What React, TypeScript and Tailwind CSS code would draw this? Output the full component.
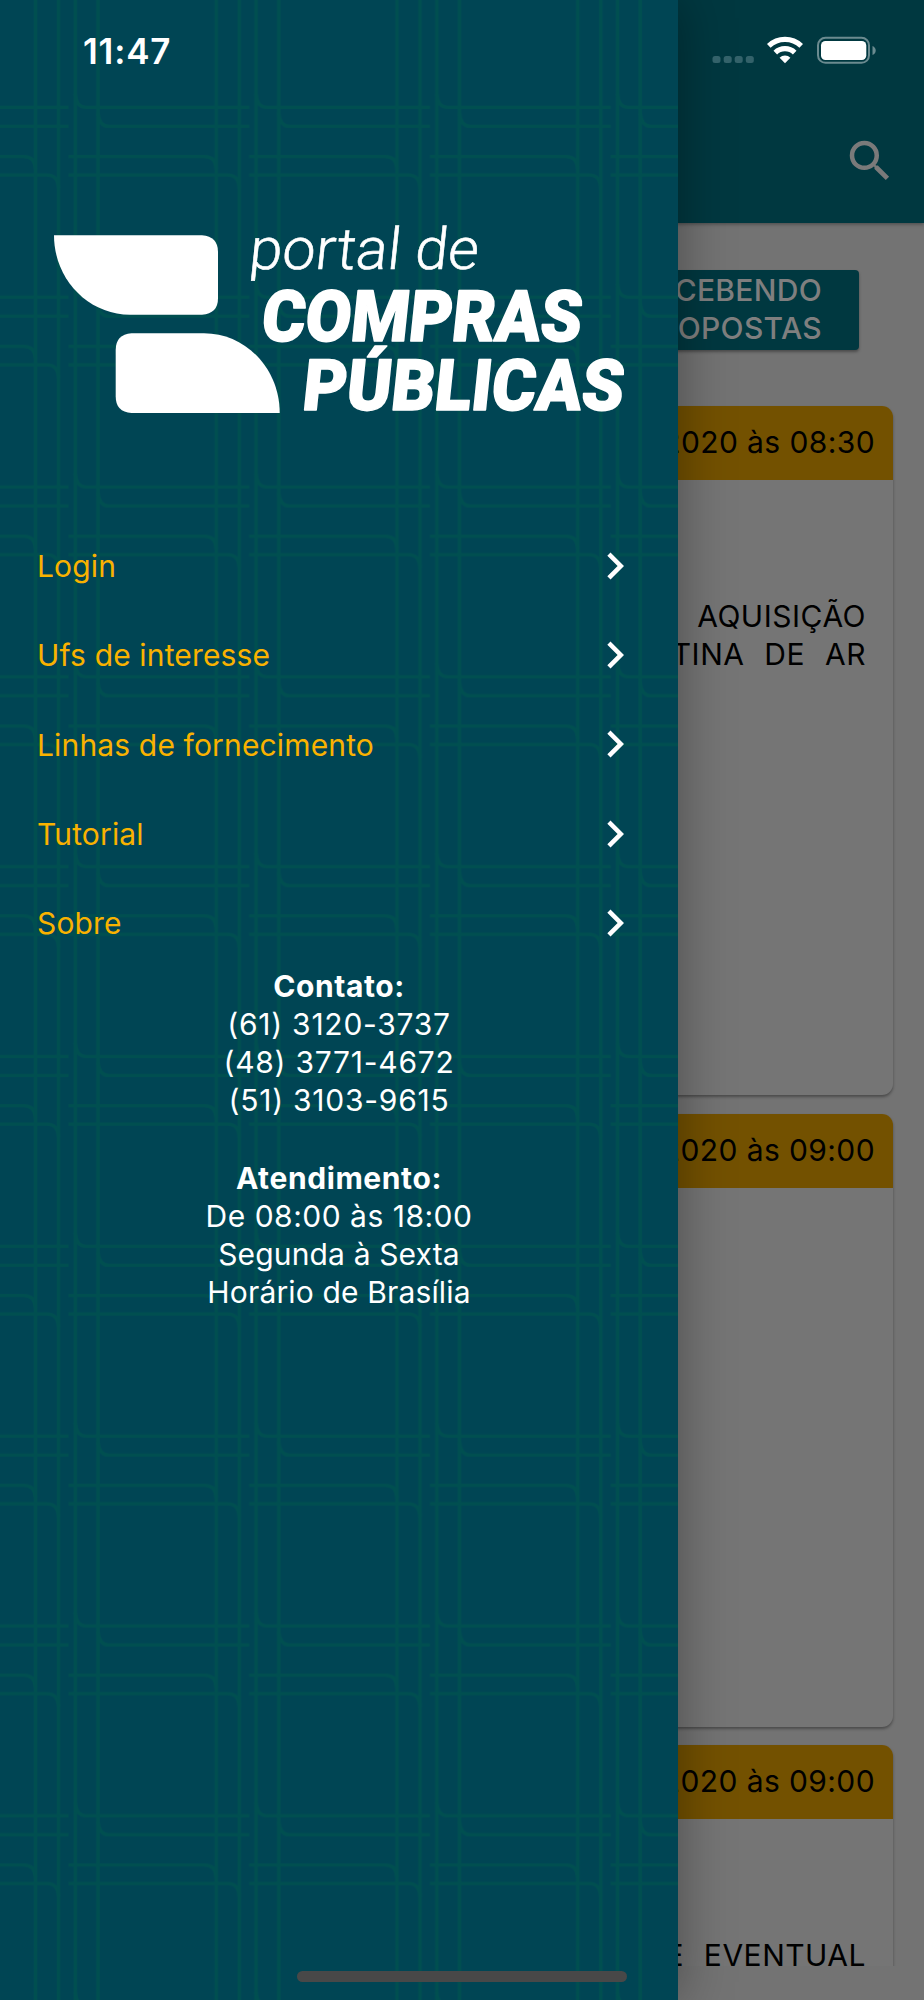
import type { ReactNode } from "react";

const menuItems = ["Login", "Ufs de interesse", "Linhas de fornecimento", "Tutorial", "Sobre"];

const telefones = ["(61) 3120-3737", "(48) 3771-4672", "(51) 3103-9615"];

const DrawerPattern = () => (
  <svg className="absolute inset-0" width="678" height="2000">
    <defs>
      <pattern id="trama" x="0" y="60" width="180.75" height="189.83" patternUnits="userSpaceOnUse">
        <g fill="none" stroke="#004f50" strokeWidth="3.4">
          <path d="M35.5 0V190M58.5 0V190M75.3 0V190M98 0V190" />
          <path d="M75.3 34Q76 47.3 86 47.3H181M0 47.3H68.5" />
          <path d="M98 53Q99 66.3 109 66.3H181M0 66.3H68.5" />
          <path d="M68.5 96.5H181M0 96.5H24Q35 96.5 35.5 109" />
          <path d="M68.5 115H181M0 115H47Q58 115 58.5 128" />
        </g>
      </pattern>
    </defs>
    <rect width="678" height="2000" fill="url(#trama)" />
  </svg>
);

const Logo = () => (
  <svg className="block" width="678" height="220" viewBox="0 215 678 220" fill="#fff">
    <path d="M54 235.3H202Q218 236.5 218 252V298.5Q218 313.5 202 314.7H130C88 314.7 54 279 54 235.3Z" />
    <path d="M131.5 333.3H204C246 333.3 279.7 369 279.7 413H131.5Q115.7 412 115.7 396.5V350Q115.7 334.5 131.5 333.3Z" />
    <g className="font-['Roboto']" stroke="#fff">
      <text transform="translate(248 268.5) skewX(-6)" fontSize="58" fontWeight="300" strokeWidth="0.6" textLength="229" lengthAdjust="spacingAndGlyphs">portal de</text>
      <text transform="translate(260 341) skewX(-6)" fontSize="71" fontWeight="900" strokeWidth="1.6" strokeLinejoin="round" textLength="320" lengthAdjust="spacingAndGlyphs">COMPRAS</text>
      <text transform="translate(301 410) skewX(-6)" fontSize="71" fontWeight="900" strokeWidth="1.6" strokeLinejoin="round" textLength="321" lengthAdjust="spacingAndGlyphs">PÚBLICAS</text>
    </g>
  </svg>
);

const StatusBar = () => (
  <div className="absolute inset-x-0 top-0 h-[102px] flex items-center justify-between pl-[83px] pr-[48px] text-white">
    <span className="text-[35px] font-semibold tracking-[0.8px]">11:47</span>
    <svg width="164" height="30" viewBox="712 36 164 30">
      <g fill="#33626a">
        <rect x="712.5" y="56" width="8" height="7" rx="2.5" />
        <rect x="723.7" y="56" width="8" height="7" rx="2.5" />
        <rect x="734.7" y="56" width="8" height="7" rx="2.5" />
        <rect x="745.8" y="56" width="8" height="7" rx="2.5" />
      </g>
      <g fill="none" stroke="#fff" strokeWidth="5.2">
        <path d="M768.8 45.8A23.5 23.5 0 0 1 801.2 45.8" />
        <path d="M775.3 52.6A14 14 0 0 1 794.7 52.6" />
      </g>
      <path d="M785 63.2L779.6 57.8A7.7 7.7 0 0 1 790.4 57.8Z" fill="#fff" />
      <rect x="818" y="37.8" width="51" height="25" rx="7.5" fill="none" stroke="#6b8b90" strokeWidth="2" />
      <rect x="821" y="41" width="45.3" height="19" rx="4.5" fill="#fff" />
      <path d="M872.5 46Q875.7 47.5 875.7 50.5T872.5 55Z" fill="#6b8b90" />
    </svg>
  </div>
);

const Card = ({ data, className, children }: { data: string; className: string; children?: ReactNode }) => (
  <div className={`ml-8 mr-[31px] rounded-[11px] bg-[#757575] shadow-[0_2px_3px_rgba(0,0,0,0.35)] overflow-hidden shrink-0 ${className}`}>
    <div className="h-[74px] bg-[#735100] pr-[18px] pb-[2px] flex items-center justify-end text-[30px] tracking-[0.4px]">
      {data}
    </div>
    <div className="pr-[27px] text-right text-[30px] leading-[38px] tracking-[0.5px]">{children}</div>
  </div>
);

const App = () => {
  return (
    <div className="relative w-[924px] h-[2000px] overflow-hidden bg-[#737373] font-['Inter',sans-serif] text-black">
      <div className="h-[1966px] flex flex-col overflow-hidden">
        <header className="h-[223px] shrink-0 bg-[#003840] shadow-[0_1px_4px_rgba(0,0,0,0.4)] flex items-end justify-end pr-[27px] pb-[35px]">
          <svg width="54" height="54" viewBox="0 0 24 24" fill="#7a7a7a">
            <path d="M15.5 14h-.79l-.28-.27A6.471 6.471 0 0 0 16 9.5 6.5 6.5 0 1 0 9.5 16c1.61 0 3.09-.59 4.23-1.57l.27.28v.79l5 4.99L20.49 19l-4.99-5zm-6 0C7.01 14 5 11.99 5 9.5S7.01 5 9.5 5 14 7.01 14 9.5 11.99 14 9.5 14z" />
          </svg>
        </header>

        <div className="flex justify-end pr-[65px] pt-[47px] pb-[56px]">
          <button className="w-[300px] h-[80px] rounded-[4px] bg-[#003840] pr-[37px] pb-[2px] text-right text-[30px] leading-[38px] font-medium tracking-[0.3px] text-[#7f7f7f] shadow-[0_2px_3px_rgba(0,0,0,0.35)]">
            RECEBENDO
            <br />
            PROPOSTAS
          </button>
        </div>

        <Card data="14/12/2020 às 08:30" className="h-[689px]">
          <p className="pt-[117px] [word-spacing:11px]">A AQUISIÇÃO</p>
          <p className="[word-spacing:11px]">CORTINA DE AR</p>
        </Card>
        <Card data="14/12/2020 às 09:00" className="mt-[19px] h-[613px]" />
        <Card data="14/12/2020 às 09:00" className="mt-[18px] h-[400px]">
          <p className="pt-[117px] [word-spacing:11px]">DE EVENTUAL</p>
        </Card>
      </div>

      <aside className="absolute left-0 top-0 w-[678px] h-full bg-[#004554] shadow-[0_0_50px_rgba(0,0,0,0.36)]">
        <DrawerPattern />
        <div className="relative pt-[215px] text-white">
          <Logo />
          <nav className="pt-[87px]">
            {menuItems.map((item) => (
              <a key={item} className="h-[89.3px] pl-[37px] pr-[36px] flex items-center justify-between text-[30px] tracking-[0.15px] text-[#f9b200]">
                {item}
                <svg className="mb-[2px]" width="54" height="54" viewBox="0 0 24 24" fill="#fff">
                  <path d="M10 6L8.59 7.41 13.17 12l-4.58 4.59L10 18l6-6z" />
                </svg>
              </a>
            ))}
          </nav>
          <div className="-mt-px text-center text-[30px] leading-[38px]">
            <p className="font-bold tracking-[0.6px]">Contato:</p>
            {telefones.map((tel) => (
              <p key={tel} className="tracking-[0.75px]">{tel}</p>
            ))}
            <p className="mt-[40px] font-bold tracking-[0.6px]">Atendimento:</p>
            <p className="tracking-[0.5px]">De 08:00 às 18:00</p>
            <p className="tracking-[0.15px]">Segunda à Sexta</p>
            <p className="tracking-[0.15px]">Horário de Brasília</p>
          </div>
        </div>
      </aside>

      <StatusBar />
      <div className="absolute left-[297px] top-[1971px] w-[330px] h-[11px] rounded-full bg-[#484848]" />
    </div>
  );
};

export default App;
